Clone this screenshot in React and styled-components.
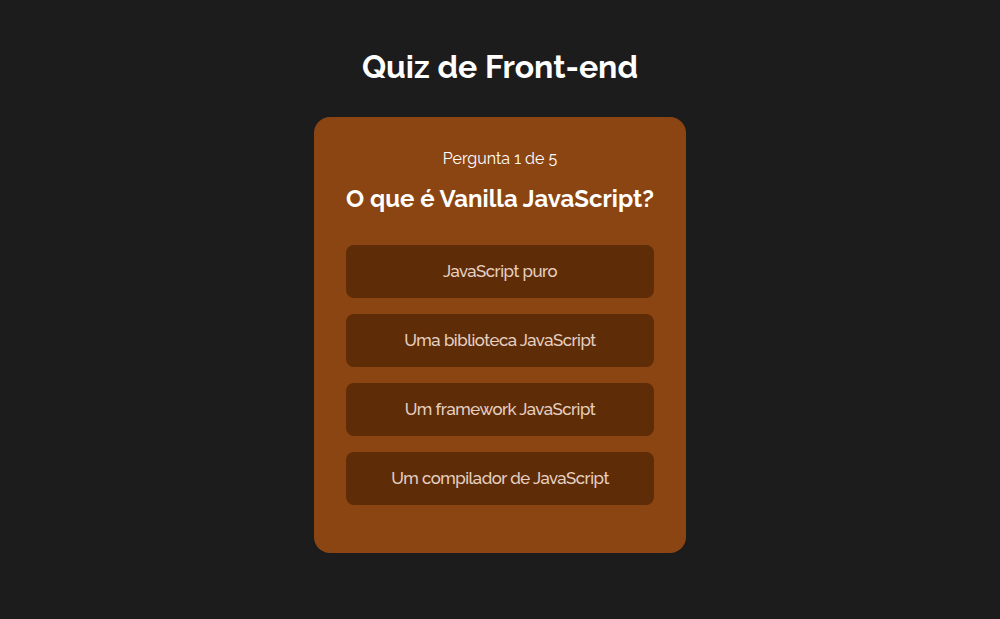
import React from "react";
import styled, { createGlobalStyle } from "styled-components";

const GlobalStyle = createGlobalStyle`
  * { box-sizing: border-box; margin: 0; padding: 0; }
  body {
    background: #1c1c1c;
    color: #fff;
    font-family: Raleway, Lato, "Open Sans", sans-serif;
  }
`;

const Page = styled.main`
  min-height: 619px;
  display: flex;
  flex-direction: column;
  align-items: center;
  padding-top: 48px;
`;

const Title = styled.h1`
  font-size: 32px;
  line-height: 38px;
  font-weight: 700;
  margin-bottom: 31px;
`;

const Card = styled.section`
  width: 372px;
  height: 436px;
  padding: 32px;
  border-radius: 16px;
  background: #8b4513;
  text-align: center;
`;

const Progress = styled.p`
  font-size: 16px;
  line-height: 19px;
  margin-bottom: 17px;
`;

const Question = styled.h2`
  font-size: 24px;
  line-height: 28px;
  font-weight: 700;
  white-space: nowrap;
  margin-bottom: 32px;
`;

const Options = styled.div`
  display: flex;
  flex-direction: column;
  gap: 16px;
`;

const Option = styled.button`
  height: 53px;
  padding-bottom: 1px;
  border: 0;
  border-radius: 8px;
  background: #5e2d07;
  color: #e6d0c2;
  font-family: inherit;
  font-size: 16.8px;
  line-height: 20px;
  font-weight: 500;
  letter-spacing: -0.5px;
  cursor: pointer;
`;

const options = [
  "JavaScript puro",
  "Uma biblioteca JavaScript",
  "Um framework JavaScript",
  "Um compilador de JavaScript",
];

export default function App() {
  return (
    <>
      <GlobalStyle />
      <Page>
        <Title>Quiz de Front-end</Title>
        <Card>
          <Progress>Pergunta 1 de 5</Progress>
          <Question>O que é Vanilla JavaScript?</Question>
          <Options>
            {options.map((text) => (
              <Option key={text}>{text}</Option>
            ))}
          </Options>
        </Card>
      </Page>
    </>
  );
}
